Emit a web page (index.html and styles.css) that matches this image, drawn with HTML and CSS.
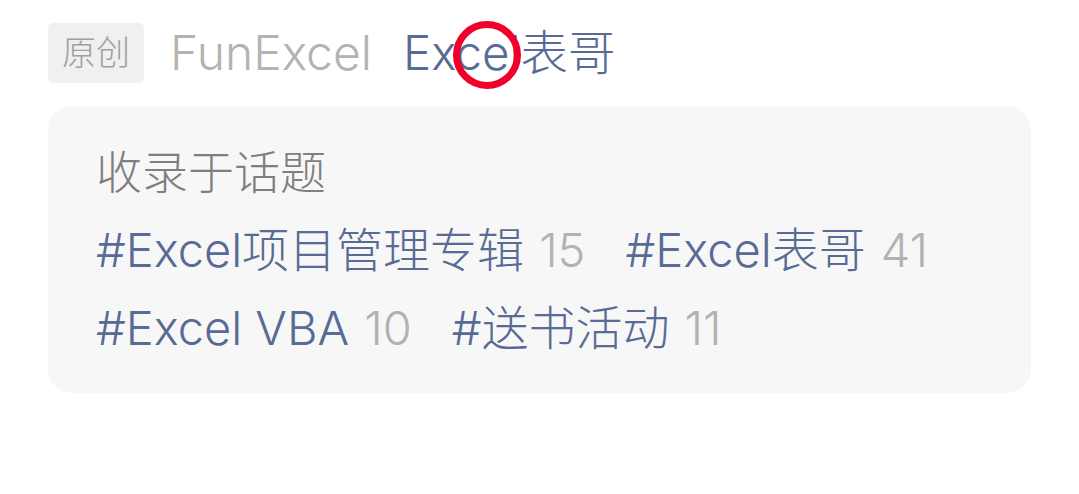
FILE: index.html
```html
<!DOCTYPE html>
<html lang="zh-CN">
<head>
<meta charset="utf-8">
<title>收录于话题</title>
<link rel="stylesheet" href="styles.css">
</head>
<body>
<div class="page">
  <div class="meta">
    <span class="badge">原创</span>
    <span class="author">FunExcel</span>
    <span class="account">Excel表哥</span>
    <span class="mark" aria-hidden="true"></span>
  </div>
  <div class="card">
    <div class="card-title">收录于话题</div>
    <div class="tags">
      <span class="tag">#Excel项目管理专辑<span class="count">15</span></span>
      <span class="tag">#Excel表哥<span class="count">41</span></span>
      <span class="tag">#Excel VBA<span class="count">10</span></span>
      <span class="tag">#送书活动<span class="count">11</span></span>
    </div>
  </div>
</div>
</body>
</html>
```

FILE: styles.css
```css
html, body {
  margin: 0;
  padding: 0;
  background: #ffffff;
}

body {
  font-family: "Inter", "Noto Sans CJK SC", sans-serif;
  font-weight: 300;
  -webkit-font-smoothing: antialiased;
}

.page {
  position: relative;
  width: 1079px;
  padding: 23px 48px 0;
  box-sizing: border-box;
}

.meta {
  display: flex;
  align-items: center;
  height: 60px;
}

.badge {
  display: flex;
  align-items: center;
  justify-content: center;
  width: 96px;
  height: 60px;
  border-radius: 5px;
  background: #f0f0f0;
  color: #a0a0a0;
  font-size: 34px;
  line-height: 60px;
}

.author {
  margin-left: 26px;
  font-size: 48px;
  line-height: 60px;
  color: #b3b3b3;
}

.account {
  margin-left: 31px;
  font-size: 47.5px;
  line-height: 60px;
  color: #576b95;
}

.mark {
  position: absolute;
  left: 453px;
  top: 21px;
  width: 68px;
  height: 68px;
  border: 7px solid #f0002a;
  border-radius: 50%;
  box-sizing: border-box;
}

.card {
  margin-top: 23px;
  background: #f7f7f7;
  border-radius: 24px;
  padding: 38px 48px 26px;
}

.card-title {
  font-size: 46px;
  line-height: 56px;
  color: #7f7f7f;
}

.tags {
  margin-top: 11px;
  display: flex;
  flex-wrap: wrap;
  column-gap: 40px;
}

.tag {
  font-size: 47px;
  line-height: 78px;
  color: #576b95;
  white-space: nowrap;
}

.count {
  margin-left: 15px;
  color: #b2b2b2;
}
```
